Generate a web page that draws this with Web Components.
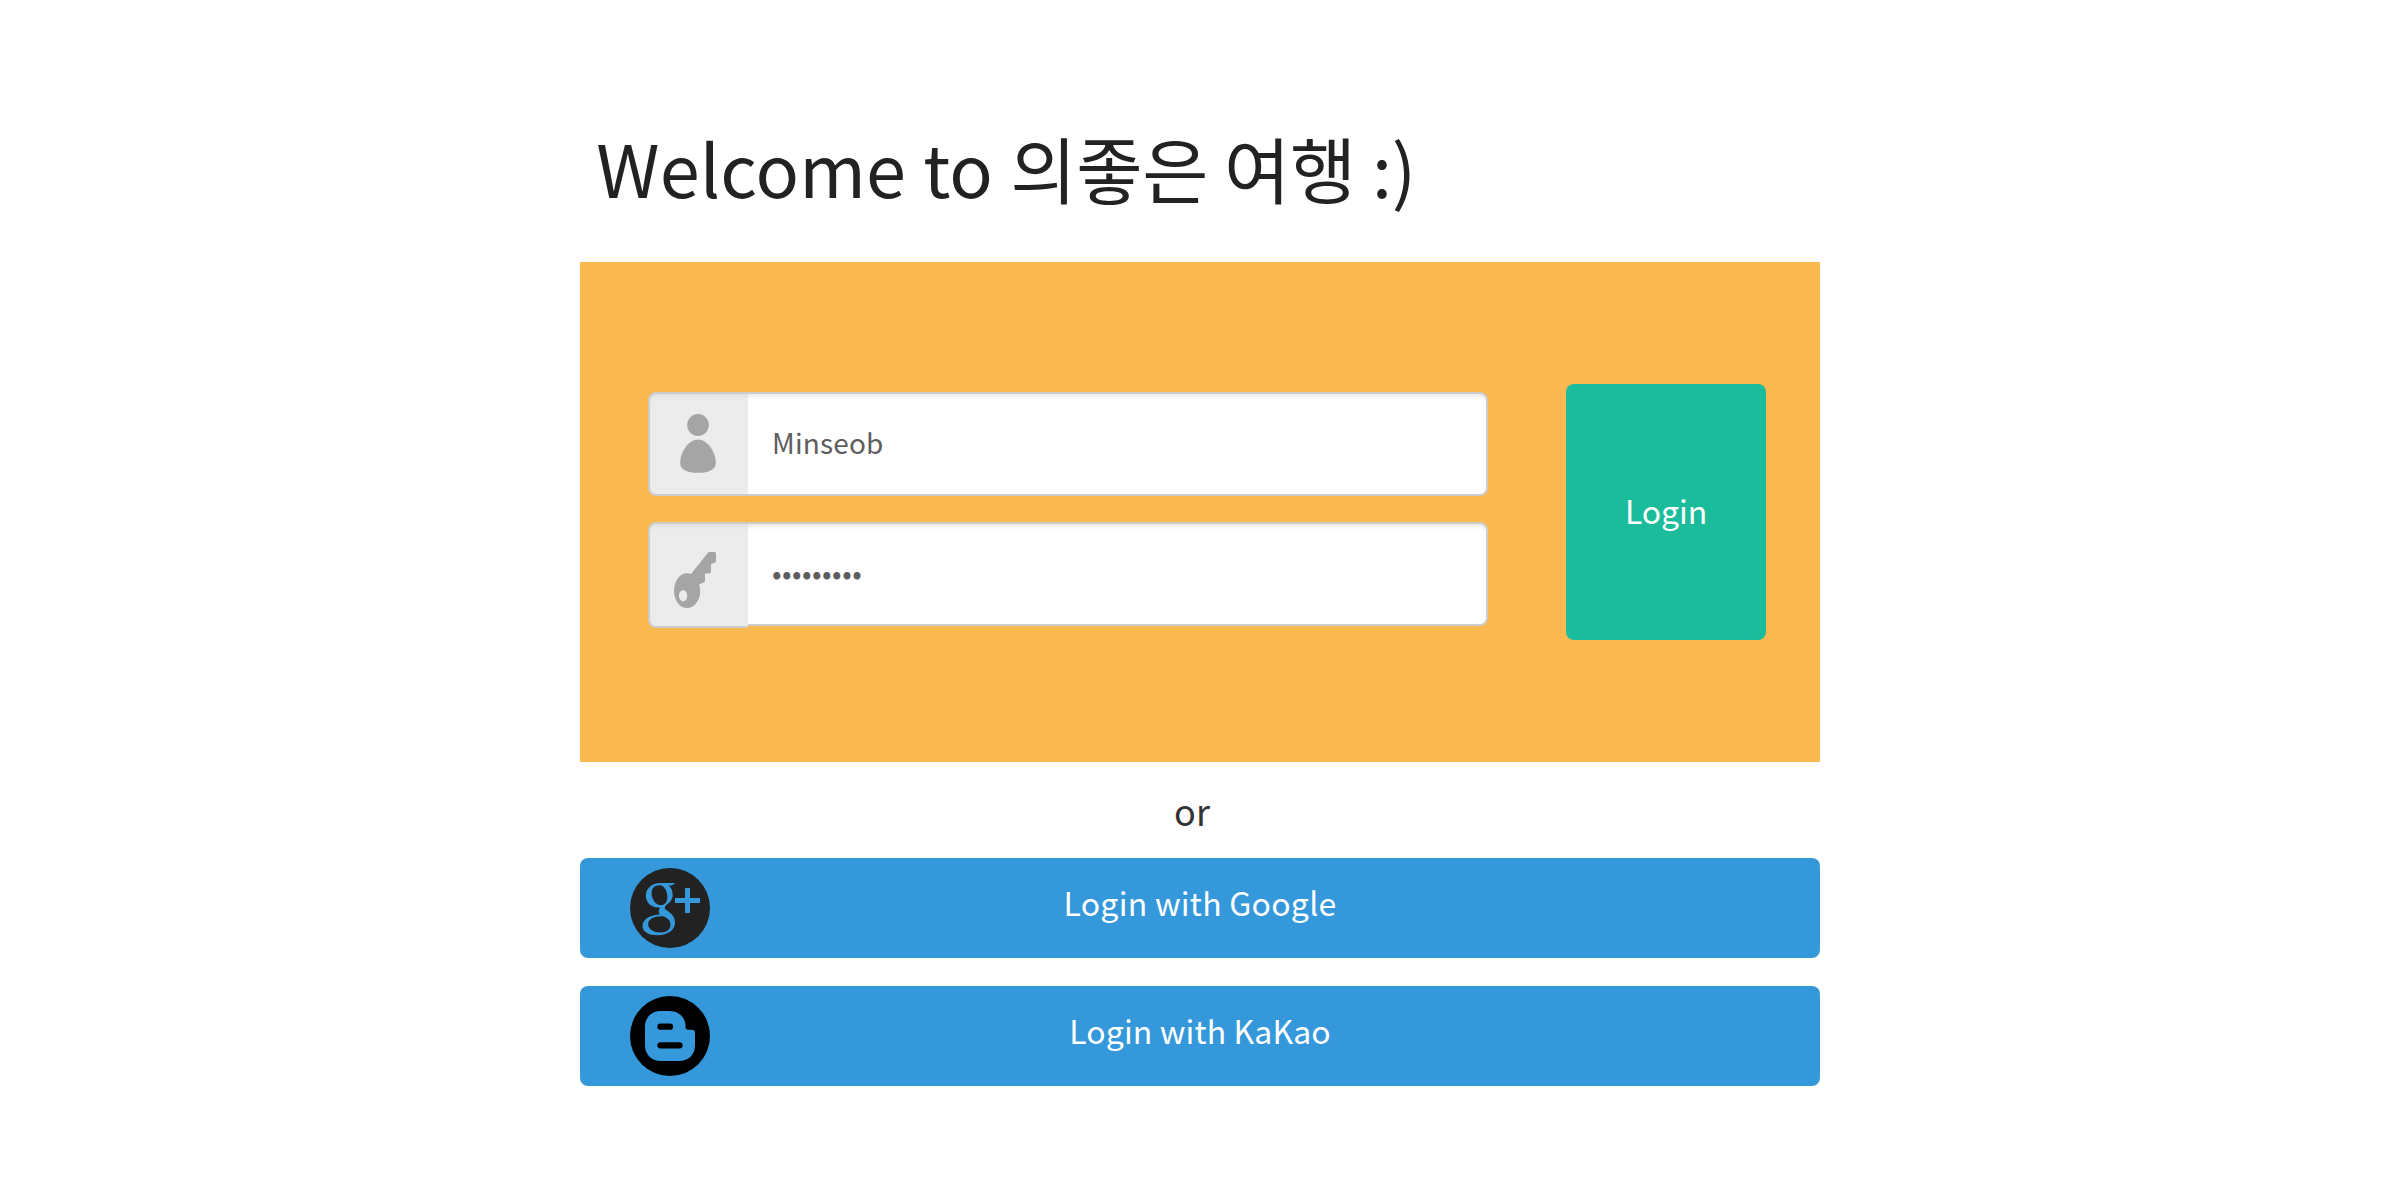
<!DOCTYPE html>
<html lang="en">
<head>
<meta charset="utf-8">
<title>Login</title>
<style>
body{margin:0;background:#fff;color:#333;font-family:"Noto Sans CJK KR",sans-serif}
</style>
</head>
<body>
<login-page></login-page>
<script>
const define=(name,html,setup)=>customElements.define(name,class extends HTMLElement{
  connectedCallback(){
    if(this.shadowRoot)return;
    this.attachShadow({mode:'open'}).innerHTML=html;
    if(setup)setup(this,this.shadowRoot);
  }
});

define('user-icon',`<style>:host{display:block;width:36px;height:60px}svg{display:block}</style>
<svg width="36" height="60" viewBox="0 0 36 60" fill="#a5a5a5"><ellipse cx="18" cy="11" rx="10.8" ry="11"/><path d="M18 25.5C27 25.5 35.800 37.500 35.800 49C35.800 55.500 29 58.800 18 58.800S.2 55.500 .2 49C.2 37.500 9 25.500 18 25.500Z"/></svg>`);

define('key-icon',`<style>:host{display:block;width:42px;height:56px}svg{display:block}</style>
<svg width="42" height="56" viewBox="0 0 42 56" fill="#a5a5a5"><path fill-rule="evenodd" d="M34.500 0H40.500Q42 0 42 1.500V8.500C42 10.800 39.500 11.300 37 12V19.500Q37 21.500 35 21.500H31V29Q31 30.300 28.500 31L25 32.500C26 35 26.200 37 26.200 39C26.200 48.500 20.300 56 13 56S0 48.500 0 39S5.500 21.300 13 21.300Q15.500 21.300 17 22ZM9.200 38.300C6.900 38.300 5 40.700 5 43.700S6.900 49.200 9.200 49.200S13.200 46.700 13.200 43.700S11.500 38.300 9.200 38.300Z"/></svg>`);

define('google-icon',`<style>:host{display:block;width:80px;height:80px}svg{display:block}</style>
<svg width="80" height="80" viewBox="0 0 80 80"><circle cx="40" cy="40" r="40" fill="#222"/>
<g fill="#3498db"><path fill-rule="evenodd" d="M45.300 15H30C22 15 15.800 20.500 15.800 27.500C15.800 34.500 21 39.500 28 39.500H30C29.300 40.800 28.800 42 28.800 43.300C28.800 44.500 29.300 45.600 30 46.400C20 46.400 12.500 51.500 12.500 57.700C12.500 64 19 67.200 27.500 67.200C38.500 67.200 45 61.500 45 54.700C45 49.500 42.500 46.500 38.500 43.500C36.500 42 34.800 41.200 34.800 39.900C34.800 38.400 35.700 37.500 37.500 36C40.500 33.500 42.700 31 42.700 26.700C42.700 22.500 41 19 38.500 17.400H42ZM29.500 17.300C34.500 17.300 37.400 23.500 37.400 29C37.400 34 35 37.100 31 37.100C25.500 37.100 21.600 31 21.600 25.200C21.600 20.500 24.500 17.300 29.500 17.300ZM31 48.200C34 48.200 35 48.800 36.500 50C39 51.800 40.500 53.500 40.500 56.500C40.500 61.300 37 64.500 30.500 64.500C23.500 64.500 18.200 61.300 18.200 56C18.200 51 24 48.200 31 48.200Z"/><path d="M55 20h5v10h10v5H60v10h-5V35H45v-5h10Z"/></g></svg>`);

define('blog-icon',`<style>:host{display:block;width:80px;height:80px}svg{display:block}</style>
<svg width="80" height="80" viewBox="0 0 80 80"><circle cx="40" cy="40" r="40"/>
<path fill="#3498db" d="M30.500 15H40C48.500 15 55.500 21.500 55.500 30V31Q55.500 33.800 58.500 33.800H62Q65 33.800 65 37V49.500C65 58.500 58.500 65 49.500 65H30.500C21.500 65 15 58.500 15 49.500V30.500C15 21.500 21.500 15 30.500 15Z"/>
<path stroke="#000" stroke-width="6.300" stroke-linecap="round" d="M30.500 30.700H40M30.500 49.300H49.500"/></svg>`);

define('login-field',`<style>
:host{display:flex;align-items:flex-start;width:840px;height:104px}
*{box-sizing:border-box}
.addon{width:100px;height:var(--addon-height,104px);border:2px solid #ccc;border-right:0;border-radius:8px 0 0 8px;background:#ececec;box-shadow:inset 0 5px 5px -3px rgba(0,0,0,.06);display:flex;justify-content:center;padding:var(--icon-padding,20px 2px 0 0)}
input{appearance:none;display:block;width:740px;height:104px;margin:0;border:2px solid #ccc;border-left:0;border-radius:0 8px 8px 0;background:#fff;box-shadow:inset 0 5px 5px -3px rgba(0,0,0,.1);padding:0 24px 4px;color:#5e5e5e;font:28px "Noto Sans CJK KR",sans-serif;letter-spacing:var(--field-spacing,.15px);outline:0}
</style><div class="addon"><slot></slot></div><input>`,(el,root)=>{
  const input=root.querySelector('input');
  input.type=el.getAttribute('type');
  input.setAttribute('value',el.getAttribute('value'));
});

define('login-button',`<style>
:host{display:block}
button{display:flex;align-items:center;justify-content:center;width:200px;height:256px;margin:0;padding:0 0 4px;border:0;border-radius:8px;background:#1bbc9b;color:#fff;font:32px "Noto Sans CJK KR",sans-serif;letter-spacing:-.1px}
</style><button><span><slot></slot></span></button>`);

define('social-button',`<style>
:host{display:block}
button{display:grid;grid-template-columns:80px 1fr 80px;align-items:center;box-sizing:border-box;width:1240px;height:100px;margin:0;padding:0 50px;border:0;border-radius:8px;background:#3498db;color:#fff;font:32px "Noto Sans CJK KR",sans-serif;letter-spacing:var(--label-spacing,.25px)}
.label{padding-bottom:12px}
</style><button><slot name="icon"></slot><span class="label"><slot></slot></span></button>`);

define('login-page',`<style>
:host{display:flex;flex-direction:column;width:1240px;margin:0 auto;padding-top:115px;box-sizing:border-box;height:1200px}
h1{margin:0 0 43px;padding-left:16.3px;font-size:72px;line-height:104px;font-weight:400;color:#222;white-space:nowrap;letter-spacing:-.25px}
h1 span{letter-spacing:.15px;word-spacing:.8px}
.panel{display:flex;align-items:flex-start;justify-content:space-between;box-sizing:border-box;height:500px;background:#fab850;padding:122px 54px 0 68px}
.fields{display:flex;flex-direction:column;gap:26px;padding-top:8px}
.password{--addon-height:106px;--icon-padding:28px 8px 0 0;--field-spacing:.5px}
.or{height:96px;line-height:96px;padding-right:16px;text-align:center;font-size:36px}
.social{display:flex;flex-direction:column;gap:28px}
.kakao{--label-spacing:.12px}
</style>
<h1><span>Welcome to </span>의좋은 여행 :)</h1>
<div class="panel">
<div class="fields">
<login-field type="text" value="Minseob"><user-icon></user-icon></login-field>
<login-field class="password" type="password" value="password1"><key-icon></key-icon></login-field>
</div>
<login-button>Login</login-button>
</div>
<div class="or">or</div>
<div class="social">
<social-button><google-icon slot="icon"></google-icon>Login with Google</social-button>
<social-button class="kakao"><blog-icon slot="icon"></blog-icon>Login with KaKao</social-button>
</div>`);
</script>
</body>
</html>
